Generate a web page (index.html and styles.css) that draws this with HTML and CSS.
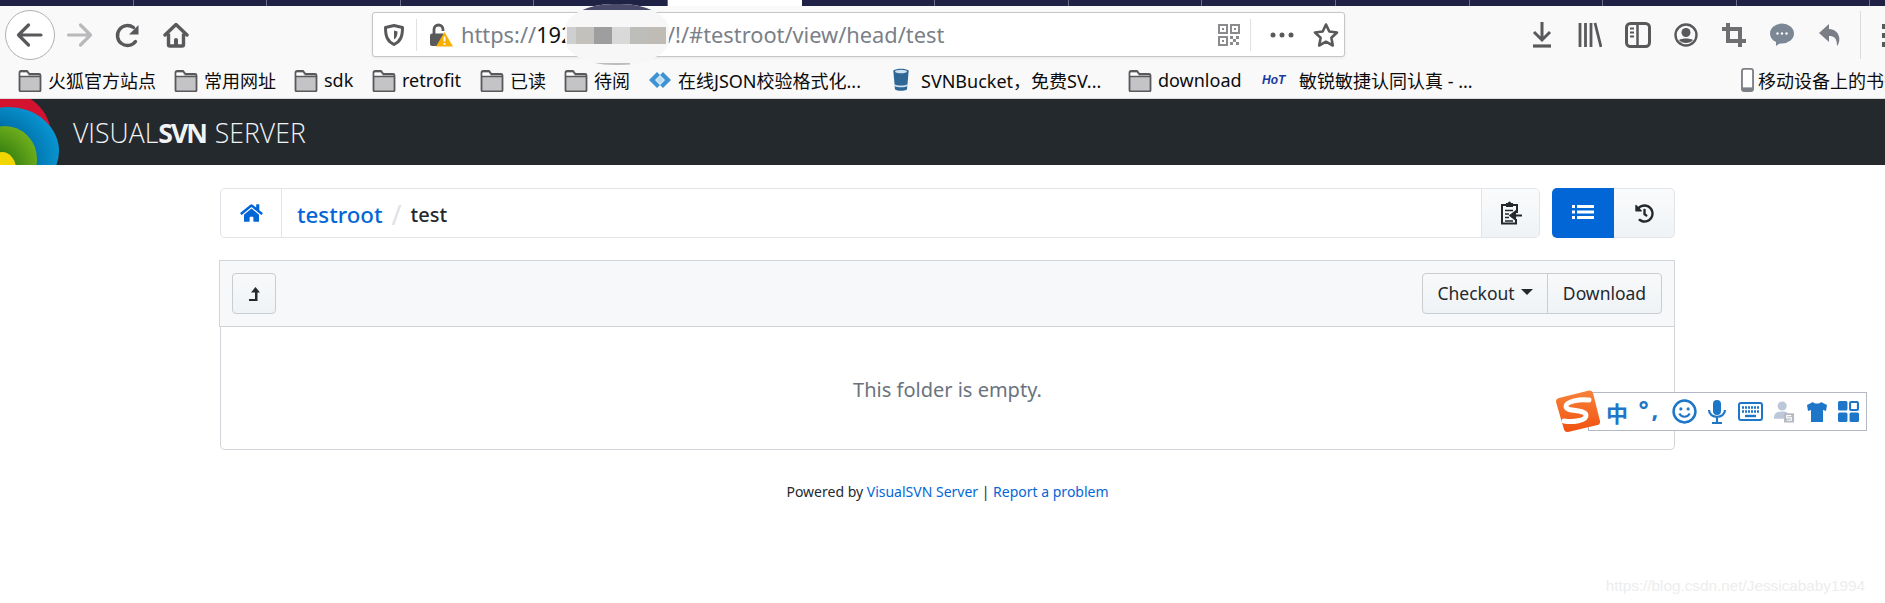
FILE: index.html
```html
<!DOCTYPE html>
<html lang="en">
<head>
<meta charset="utf-8">
<title>VisualSVN Server</title>
<link rel="stylesheet" href="styles.css">
</head>
<body>
<svg class="defs" width="0" height="0" aria-hidden="true">
  <symbol id="folder" viewBox="0 0 24 24"><path d="M1.500 22V4.500A1.500 1.500 0 0 1 3 3h6l2.500 3H21a1.500 1.500 0 0 1 1.500 1.500V22A1.500 1.500 0 0 1 21 23.500H3A1.500 1.500 0 0 1 1.500 22z" fill="#c4c4c6" stroke="#59595c" stroke-width="1.800"/><path d="M2 8.500h20" stroke="#59595c" stroke-width="1.500"/><path d="M2.500 5h6l2 2.500H2.500z" fill="#fff"/></symbol>
</svg>
<div class="tabstrip">
  <span class="tab"></span><span class="tab"></span><span class="tab"></span><span class="tab"></span><span class="tab"></span>
  <span class="tab tab-active"></span>
  <span class="tab"></span><span class="tab"></span><span class="tab"></span><span class="tab"></span><span class="tab"></span><span class="tab"></span><span class="tab"></span><span class="tab"></span>
</div>
<div class="toolbar">
  <button class="back"><svg width="30" height="30" viewBox="0 0 30 30"><path d="M26 15H4.500M13.500 5 3.500 15l10 10" fill="none" stroke="#59595c" stroke-width="3.200" stroke-linecap="round" stroke-linejoin="round"/></svg></button>
  <span class="tool"><svg width="28" height="26" viewBox="0 0 28 26"><path d="M2.500 13h21M14.500 3l10 10-10 10" fill="none" stroke="#b9b9bb" stroke-width="3.200" stroke-linecap="round" stroke-linejoin="round"/></svg></span>
  <span class="tool"><svg width="26" height="26" viewBox="0 0 26 26"><path d="M20.500 19.500A10 10 0 1 1 18.500 5.500" fill="none" stroke="#59595c" stroke-width="3.400" stroke-linecap="round"/><path d="M23.500 3v9.500H14z" fill="#59595c"/></svg></span>
  <span class="tool"><svg width="26" height="26" viewBox="0 0 26 26"><path d="M2 13 13 2.500 24 13" fill="none" stroke="#59595c" stroke-width="3.400" stroke-linecap="round" stroke-linejoin="round"/><path d="M5.500 11.500v11a1.500 1.500 0 0 0 1.500 1.500h12a1.500 1.500 0 0 0 1.500-1.500v-11" fill="none" stroke="#59595c" stroke-width="3.400"/><path d="M11 24v-6a2 2 0 0 1 4 0v6z" fill="#59595c"/></svg></span>
  <div class="urlbar">
    <svg class="shield" width="22" height="24" viewBox="0 0 22 24"><path d="M11 2.500 19.500 4.500c0 8.500-1.500 13.500-8.500 17C4 18 2.500 13 2.500 4.500z" fill="none" stroke="#59595c" stroke-width="3" stroke-linejoin="round"/><path d="M11 7.500l3.500 1C14.500 12 14 14.500 11 16.500z" fill="#59595c"/></svg>
    <span class="url-sep"></span>
    <svg class="lock" width="24" height="24" viewBox="0 0 24 24"><path d="M5 11V6.500a4.500 4.500 0 0 1 9 0V8" fill="none" stroke="#59595c" stroke-width="2.800"/><rect x="1" y="10.500" width="15" height="12.500" rx="2" fill="#59595c"/><path d="M15.500 9 24 23.500H7z" fill="#f7b000"/><path d="M15.500 13.500v5M15.500 20v1.800" stroke="#fff" stroke-width="1.800"/></svg>
    <div class="url"><span class="url-lead"><span class="url-muted">https://</span><span class="url-host">192</span></span><span class="url-muted">/!/#testroot/view/head/test</span></div>
    <svg class="qr" width="22" height="22" viewBox="0 0 22 22"><path d="M1 1h8v8H1zM13 1h8v8h-8zM1 13h8v8H1z" fill="none" stroke="#8b8b8d" stroke-width="2"/><path d="M4 4h2v2H4zM16 4h2v2h-2zM4 16h2v2H4zM12 12h3v3h-3zM18 12h3v3h-3zM15 15h3v3h-3zM12 18h3v3h-3zM18 18h3v3h-3z" fill="#8b8b8d"/></svg>
    <span class="url-sep url-sep-r"></span>
    <svg class="dots" width="24" height="6" viewBox="0 0 24 6"><circle cx="3" cy="3" r="2.500" fill="#59595c"/><circle cx="12" cy="3" r="2.500" fill="#59595c"/><circle cx="21" cy="3" r="2.500" fill="#59595c"/></svg>
    <svg class="star" width="26" height="26" viewBox="0 0 26 26"><path d="M13 2.500l3.300 7 7.700 1-5.600 5.300 1.400 7.700-6.800-3.800-6.800 3.800 1.400-7.700L2 10.500l7.700-1z" fill="none" stroke="#59595c" stroke-width="2.600" stroke-linejoin="round"/></svg>
  </div>
  <div class="tools-right">
    <span class="tool"><svg width="24" height="28" viewBox="0 0 24 28"><path d="M12 1v17M4 11l8 8 8-8" fill="none" stroke="#59595c" stroke-width="3"/><path d="M3 25h18" stroke="#59595c" stroke-width="3.200"/></svg></span>
    <span class="tool"><svg width="24" height="26" viewBox="0 0 24 26"><path d="M2 1v24M7.500 1v24M13 1v24M17 1l6 24" fill="none" stroke="#59595c" stroke-width="2.800"/></svg></span>
    <span class="tool"><svg width="26" height="26" viewBox="0 0 26 26"><rect x="1.500" y="1.500" width="23" height="23" rx="4" fill="none" stroke="#59595c" stroke-width="3"/><path d="M12.500 2v22" stroke="#59595c" stroke-width="2.500"/><path d="M5 6.500h4M5 10.500h4M5 14.500h4" stroke="#59595c" stroke-width="2"/></svg></span>
    <span class="tool"><svg width="26" height="26" viewBox="0 0 26 26"><circle cx="13" cy="13" r="10.500" fill="none" stroke="#59595c" stroke-width="2.400"/><circle cx="13" cy="10.500" r="4.500" fill="#59595c"/><path d="M6 18c3 4 11 4 14 0-3-2-11-2-14 0z" fill="#59595c"/></svg></span>
    <span class="tool"><svg width="24" height="24" viewBox="0 0 24 24"><path d="M6 0v18h18M0 6h18v18" fill="none" stroke="#6f6f72" stroke-width="4"/></svg></span>
    <span class="tool"><svg width="26" height="24" viewBox="0 0 26 24"><ellipse cx="13" cy="10.500" rx="12" ry="10" fill="#7b8794"/><path d="M7 17v6l6-4z" fill="#7b8794"/><circle cx="8.500" cy="10.500" r="1.200" fill="#fff"/><circle cx="13" cy="10.500" r="1.200" fill="#fff"/><circle cx="17.500" cy="10.500" r="1.200" fill="#fff"/></svg></span>
    <span class="tool"><svg width="24" height="24" viewBox="0 0 24 24"><path d="M11 1 1 10l10 9v-6c5 0 8 2 8 10 4-4 4-16-8-17z" fill="#7b7f85"/></svg></span>
  </div>
  <span class="tool-sep"></span>
  <svg class="menu-dots" width="5" height="24" viewBox="0 0 5 24"><rect y="1" width="5" height="5" fill="#59595c"/><rect y="10" width="5" height="5" fill="#59595c"/><rect y="19" width="5" height="5" fill="#59595c"/></svg>
  <div class="redact">
    <span class="redact-hump"></span>
    <span class="redact-block b0"></span><span class="redact-block b1"></span><span class="redact-block b2"></span><span class="redact-block b3"></span><span class="redact-block b4"></span><span class="redact-block b5"></span>
    <span class="redact-line"></span>
  </div>
</div>
<div class="bookmarks">
  <a class="bm"><svg class="bm-ico"><use href="#folder"/></svg>火狐官方站点</a>
  <a class="bm"><svg class="bm-ico"><use href="#folder"/></svg>常用网址</a>
  <a class="bm"><svg class="bm-ico"><use href="#folder"/></svg>sdk</a>
  <a class="bm"><svg class="bm-ico"><use href="#folder"/></svg>retrofit</a>
  <a class="bm"><svg class="bm-ico"><use href="#folder"/></svg>已读</a>
  <a class="bm"><svg class="bm-ico"><use href="#folder"/></svg>待阅</a>
  <a class="bm"><svg class="bm-ico" viewBox="0 0 24 24"><path d="M9 4 1 12l8 8 3-3-5-5 5-5z" fill="#3f93d3"/><path d="M15 4l8 8-8 8-3-3 5-5-5-5z" fill="#3f93d3"/><path d="M12 8l4 4-4 4-4-4z" fill="#bcdcf3"/></svg>在线JSON校验格式化...</a>
  <a class="bm bm-svn"><svg class="bm-ico" viewBox="0 0 24 28"><path d="M3 3c4-3 14-3 18 0l-2 22c-3 2-11 2-14 0z" fill="#2f6797"/><ellipse cx="12" cy="4" rx="7" ry="2" fill="#cfe0ee"/><path d="M4 19c4 2 12 2 16 0v2c-4 2-12 2-16 0z" fill="#cfe0ee"/></svg>SVNBucket，免费SV...</a>
  <a class="bm"><svg class="bm-ico"><use href="#folder"/></svg>download</a>
  <a class="bm"><span class="hot">HoT</span>敏锐敏捷认同认真 - ...</a>
  <a class="bm bm-mobile"><svg class="bm-phone" viewBox="0 0 14 26"><rect x="1" y="1" width="12" height="24" rx="2.500" fill="#fff" stroke="#7c7f85" stroke-width="2"/><rect x="1" y="21" width="12" height="4" fill="#7c7f85"/></svg>移动设备上的书签</a>
</div>
<header class="navbar">
  <svg class="logo" width="62" height="66" viewBox="0 0 62 66">
    <defs>
      <radialGradient id="lb" cx=".3" cy=".6" r=".8"><stop offset=".5" stop-color="#006fa8"/><stop offset="1" stop-color="#0a9fdc"/></radialGradient>
      <radialGradient id="lg" cx=".3" cy=".7" r=".8"><stop offset=".3" stop-color="#2f7a10"/><stop offset="1" stop-color="#72b01c"/></radialGradient>
    </defs>
    <ellipse cx="3" cy="36" rx="48" ry="44" fill="#d2122e"/>
    <ellipse cx="8" cy="52" rx="51" ry="44" fill="url(#lb)"/>
    <ellipse cx="5" cy="60" rx="32" ry="33" fill="url(#lg)"/>
    <ellipse cx="2" cy="70" rx="14" ry="17" fill="#f2d600"/>
  </svg>
  <div class="brand"><span class="brand-light">VISUAL</span><span class="brand-bold">SVN</span><span class="brand-light brand-server">SERVER</span></div>
</header>
<main class="container">
  <div class="pathrow">
    <nav class="crumb">
      <a class="crumb-home"><svg width="23" height="20" viewBox="0 0 576 512"><path fill="#0366d6" d="M280.370 148.260L96 300.110V464a16 16 0 0 0 16 16l112.060-.29a16 16 0 0 0 15.920-16V368a16 16 0 0 1 16-16h64a16 16 0 0 1 16 16v95.640a16 16 0 0 0 16 16.050L464 480a16 16 0 0 0 16-16V300L295.670 148.260a12.190 12.190 0 0 0-15.300 0zM571.600 251.470L488 182.560V44.050a12 12 0 0 0-12-12h-56a12 12 0 0 0-12 12v72.610L318.470 43a48 48 0 0 0-61 0L4.340 251.470a12 12 0 0 0-1.600 16.900l25.500 31A12 12 0 0 0 45.150 301l235.220-193.740a12.190 12.190 0 0 1 15.300 0L530.900 301a12 12 0 0 0 16.900-1.600l25.500-31a12 12 0 0 0-1.700-16.930z"/></svg></a>
      <div class="crumb-path"><a class="crumb-link">testroot</a><span class="crumb-slash">/</span><span class="crumb-cur">test</span></div>
      <button class="crumb-copy"><svg width="22" height="24" viewBox="0 0 22 24"><path d="M6.500 4H2v18.500h14V18M12.500 4H17v8" fill="none" stroke="#24292e" stroke-width="2"/><path d="M6 2h2a1.500 1.500 0 0 1 3 0h2v4H6z" fill="#24292e"/><path d="M5 9.500h8M5 13h4M5 16.500h4M5 20h8" stroke="#24292e" stroke-width="1.600"/><path d="M22 14.500h-7M15 11l-4.500 3.500L15 18z" stroke="#24292e" stroke-width="2.200" fill="#24292e"/></svg></button>
    </nav>
    <div class="viewtabs">
      <button class="vt vt-on"><svg width="22" height="18" viewBox="0 0 22 18"><path d="M0 1h3v3H0zM5 1h17v3H5zM0 6.500h3v3H0zM5 6.500h17v3H5zM0 12h3v3H0zM5 12h17v3H5z" fill="#fff"/></svg></button>
      <button class="vt vt-off"><svg width="19" height="19" viewBox="0 0 512 512"><path fill="#24292e" d="M504 255.531c.253 136.640-111.180 248.372-247.820 248.468-59.015.042-113.223-20.530-155.822-54.911-11.077-8.940-11.905-25.541-1.839-35.607l11.267-11.267c8.609-8.609 22.353-9.551 31.891-1.984C173.062 425.135 212.781 440 256 440c101.705 0 184-82.311 184-184 0-101.705-82.311-184-184-184-48.814 0-93.149 18.969-126.068 49.932l50.754 50.754c10.080 10.080 2.941 27.314-11.313 27.314H24c-8.837 0-16-7.163-16-16V38.627c0-14.254 17.234-21.393 27.314-11.314l49.372 49.372C129.209 34.136 189.552 8 256 8c136.810 0 247.747 110.780 248 247.531zm-180.912 78.784l9.823-12.630c8.138-10.463 6.253-25.542-4.210-33.679L288 256.349V152c0-13.255-10.745-24-24-24h-16c-13.255 0-24 10.745-24 24v135.651l65.409 50.874c10.463 8.137 25.541 6.253 33.679-4.210z"/></svg></button>
    </div>
  </div>
  <section class="panel">
    <div class="panel-head">
      <button class="btn btn-up"><svg width="12" height="16" viewBox="0 0 12 16"><path d="M7.500 1 12 6.500H9.500V15H1v-2h6V6.500H3z" fill="#24292e"/></svg></button>
      <div class="btn-group"><button class="btn btn-checkout">Checkout<span class="caret"></span></button><button class="btn btn-download">Download</button></div>
    </div>
    <div class="panel-body">This folder is empty.</div>
  </section>
  <footer class="foot">Powered by <a class="foot-link">VisualSVN Server</a> | <a class="foot-link">Report a problem</a></footer>
</main>
<aside class="ime">
  <svg class="ime-logo" width="46" height="44" viewBox="0 0 46 44"><defs><linearGradient id="ig" x1="0" y1="0" x2="0" y2="1"><stop offset="0" stop-color="#f7823a"/><stop offset="1" stop-color="#f0520f"/></linearGradient></defs><path d="M4 9 34 1.500Q37 1 38 4l7 28q.5 3-2.500 4L13 43q-3 .5-4-2.500L1 13q-.5-3 3-4z" fill="url(#ig)"/><path d="M34 11c-9-1-23 1-23 6.500s19 2.500 20 8.500-14 7.500-22 6" fill="none" stroke="#fff" stroke-width="5" stroke-linecap="round"/></svg>
  <div class="ime-items">
    <span class="ime-zh">中</span>
    <span class="ime-punc">°,</span>
    <svg width="25" height="25" viewBox="0 0 24 24"><circle cx="12" cy="12" r="10.500" fill="none" stroke="#1e76c9" stroke-width="2.400"/><circle cx="8.500" cy="9.500" r="1.500" fill="#1e76c9"/><circle cx="15.500" cy="9.500" r="1.500" fill="#1e76c9"/><path d="M7 14c2 4 8 4 10 0" fill="none" stroke="#1e76c9" stroke-width="2"/></svg>
    <svg width="20" height="24" viewBox="0 0 20 24"><rect x="6" y="0" width="8" height="15" rx="4" fill="#1e76c9"/><path d="M2 10c0 9 16 9 16 0M10 17v5M5 23h10" fill="none" stroke="#1e76c9" stroke-width="2.200"/></svg>
    <svg width="25" height="19" viewBox="0 0 25 19"><rect x="1" y="1" width="23" height="17" rx="2" fill="none" stroke="#1e76c9" stroke-width="2"/><path d="M4 5.500h17M4 9.500h17" stroke="#1e76c9" stroke-width="2.400" stroke-dasharray="2 1"/><path d="M7 14h11" stroke="#1e76c9" stroke-width="2.400"/></svg>
    <svg width="22" height="23" viewBox="0 0 24 24"><circle cx="10" cy="6" r="5" fill="#bcc8da"/><path d="M1 20c0-6 3-8 9-8s7 2 7 4v4z" fill="#bcc8da"/><rect x="12" y="14" width="11" height="10" fill="#b4b9c2"/><path d="M20 16.500h-5v2.500h5v2.500h-5" fill="none" stroke="#fff" stroke-width="1.200"/></svg>
    <svg width="22" height="22" viewBox="0 0 22 22"><path d="M7 1 1 4l1 6 3-1v12h12V9l3 1 1-6-6-3c-1 2-7 2-8 0z" fill="#1e76c9"/></svg>
    <svg width="21" height="21" viewBox="0 0 20 20"><rect width="9" height="9" rx="1.500" fill="#1e76c9"/><rect x="11.500" y="1" width="7.500" height="7.500" rx="1" fill="none" stroke="#1e76c9" stroke-width="2"/><rect y="11" width="9" height="9" rx="1.500" fill="#1e76c9"/><rect x="11" y="11" width="9" height="9" rx="1.500" fill="#1e76c9"/></svg>
  </div>
</aside>
<div class="watermark">https://blog.csdn.net/Jessicababy1994</div>
</body>
</html>
```
FILE: styles.css
```css
* { box-sizing: border-box; }
html, body { margin: 0; padding: 0; }
body {
  position: relative;
  width: 1885px;
  height: 603px;
  overflow: hidden;
  background: #fff;
  color: #24292e;
  font-family: "Noto Sans", "Noto Sans CJK SC", sans-serif;
}
button { font: inherit; color: inherit; padding: 0; margin: 0; }
.defs { position: absolute; }

.tabstrip { display: flex; height: 6px; background: #1f2145; }
.tab { flex: 0 0 133.6px; border-right: 1px solid #6b6d88; }
.tab-active { background: #fff; border-right: 0; }

.toolbar {
  position: relative;
  display: flex;
  align-items: center;
  height: 57px;
  background: #f9f9fa;
}
.back {
  flex: none;
  width: 50px;
  height: 50px;
  margin-left: 5px;
  display: flex;
  align-items: center;
  justify-content: center;
  border: 1px solid #b1b1b3;
  border-radius: 50%;
  background: #fff;
}
.tool { flex: 0 0 48px; display: flex; align-items: center; justify-content: center; }
.back + .tool { margin-left: 1px; }
.urlbar {
  flex: none;
  display: flex;
  align-items: center;
  width: 973px;
  height: 45px;
  margin-left: 172px;
  background: #fff;
  border: 1px solid #c6c6c8;
  border-radius: 3px;
  box-shadow: 0 1px 3px rgba(0,0,0,.08);
}
.shield { margin-left: 10px; flex: none; }
.url-sep { width: 1px; height: 32px; background: #e1e1e3; margin-left: 11px; flex: none; }
.lock { margin-left: 12px; flex: none; }
.url { flex: 0 0 744px; display: flex; margin-left: 8px; font-size: 21.800px; white-space: nowrap; }
.url-lead { flex: 0 0 206px; }
.url-muted { color: #7a8088; }
.url-host { color: #111; }
.qr { flex: none; margin-left: 13px; }
.url-sep-r { margin-left: 10px; }
.dots { flex: none; margin-left: 19px; }
.star { flex: none; margin-left: 19px; }
.tools-right { flex: none; display: flex; margin-left: 173px; }
.tool-sep { flex: none; width: 1px; height: 48px; margin-left: 6px; background: #dcdcde; }
.menu-dots { flex: none; margin-left: 21px; }

.redact { position: absolute; left: 565px; top: -2px; width: 104px; height: 61px; background: #f7f7f7; border-radius: 46% / 42%; overflow: hidden; }
.redact-hump { position: absolute; left: 0; top: 0; width: 100%; height: 6px; background: #4a4b6a; }
.redact-block { position: absolute; top: 23px; height: 17px; }
.b0 { left: 2px; width: 9px; background: #cfcfcf; }
.b1 { left: 11px; width: 18px; background: #c2c1bc; }
.b2 { left: 29px; width: 18px; background: #9e9e9e; }
.b3 { left: 47px; width: 18px; background: #d8d9d8; }
.b4 { left: 65px; width: 18px; background: #bdbdb9; }
.b5 { left: 83px; width: 18px; background: #bfbcb6; }
.redact-line { position: absolute; left: 28px; bottom: 0; width: 37px; height: 2px; background: #bdbdbd; }

.bookmarks {
  display: grid;
  grid-template-columns: 156px 120px 78px 108px 84px 84px 241px 239px 134px 479px 144px;
  align-items: center;
  height: 36px;
  padding: 0 0 2px 18px;
  background: #f9f9fa;
  border-bottom: 1px solid #dcdcde;
  font-size: 18px;
  color: #0c0c0d;
  overflow: hidden;
}
.bm { display: flex; align-items: center; gap: 6px; white-space: nowrap; min-width: 0; }
.bm-ico { flex: none; width: 24px; height: 24px; }
.bm-svn { gap: 8px; }
.bm-phone { flex: none; width: 13px; height: 24px; margin-right: -2px; }
.hot { flex: none; width: 30px; margin-right: 1px; font: italic 700 12px "Liberation Sans", sans-serif; color: #1a3aa0; }

.navbar { display: flex; align-items: center; height: 66px; background: #24292e; overflow: hidden; }
.logo { flex: none; }
.brand { margin-left: 11px; padding-top: 1px; font-family: "Open Sans", sans-serif; font-size: 26.600px; color: #f1f3f4; white-space: nowrap; }
.brand-light { font-weight: 300; }
.brand-bold { font-weight: 700; letter-spacing: -2px; }
.brand-server { margin-left: 9px; }

.container { width: 1455px; margin-left: 220px; }
.pathrow { display: flex; gap: 12px; height: 50px; margin-top: 23px; }
.crumb {
  flex: 1;
  display: flex;
  align-items: stretch;
  border: 1px solid #e1e4e8;
  border-radius: 5px;
  overflow: hidden;
}
.crumb-home { flex: 0 0 61px; display: flex; align-items: center; justify-content: center; border-right: 1px solid #e1e4e8; }
.crumb-path { flex: 1; display: flex; align-items: center; padding: 2px 0 0 15px; font-size: 22.300px; font-weight: 500; }
.crumb-link { color: #0366d6; }
.crumb-slash { color: #dfe2e6; margin: 0 9px; font-size: 27px; font-weight: 400; }
.crumb-cur { font-size: 20px; }
.crumb-copy {
  flex: 0 0 58px;
  display: flex; align-items: center; justify-content: center;
  border: 0;
  border-left: 1px solid #e1e4e8;
  background: linear-gradient(#fafbfc, #eff3f6);
}
.viewtabs { flex: 0 0 123px; display: flex; }
.vt { display: flex; align-items: center; justify-content: center; }
.vt-on { flex: 0 0 62px; border: 0; border-radius: 5px 0 0 5px; background: #0366d6; }
.vt-off { flex: 1; border: 1px solid #e1e4e8; border-left: 0; border-radius: 0 5px 5px 0; background: linear-gradient(#fafbfc, #eff3f6); }

.panel { margin-top: 22px; }
.panel-head {
  display: flex;
  justify-content: space-between;
  align-items: center;
  height: 67px;
  margin-left: -1px;
  padding: 0 12px;
  background: #f6f8fa;
  border: 1px solid #d1d5da;
}
.btn {
  display: flex; align-items: center; justify-content: center;
  height: 41px;
  padding-bottom: 2px;
  border: 1px solid #c8cdd2;
  background: linear-gradient(#f8f9fa, #eff3f6);
  font-size: 17.500px;
  color: #24292e;
}
.btn-up { width: 44px; border-radius: 4px; padding-bottom: 0; }
.btn-group { display: flex; }
.btn-checkout { width: 126px; border-radius: 4px 0 0 4px; }
.btn-download { width: 115px; margin-left: -1px; border-radius: 0 4px 4px 0; }
.caret { width: 0; height: 0; margin-left: 6px; margin-top: -2px; border: 6px solid transparent; border-top-color: #24292e; border-bottom: 0; }
.panel-body {
  height: 123px;
  padding-top: 3px;
  display: flex; align-items: center; justify-content: center;
  border: 1px solid #d1d5da;
  border-top: 0;
  border-radius: 0 0 5px 5px;
  font-size: 20px;
  color: #6a737d;
}
.foot { margin-top: 32px; text-align: center; font-size: 14px; line-height: 20px; }
.foot-link { color: #0366d6; }

.ime { position: absolute; left: 1555px; top: 389px; width: 312px; height: 44px; }
.ime-logo { position: absolute; left: 0; top: 0; z-index: 1; }
.ime-items {
  position: absolute; left: 33px; top: 3px; right: 0; height: 39px;
  display: flex; align-items: center; justify-content: space-between;
  padding: 0 7px 0 17px;
  background: #fff;
  border: 1px solid #b4b8c4;
}
.ime-zh { font: 700 22px "Noto Sans CJK SC", sans-serif; color: #1e76c9; }
.ime-punc { font: 700 24px "Noto Sans", sans-serif; letter-spacing: 3px; color: #1e76c9; margin-bottom: 6px; }

.watermark { position: absolute; right: 20px; bottom: 8px; font: 15.300px "Liberation Sans", sans-serif; color: #ededed; white-space: nowrap; }
```
